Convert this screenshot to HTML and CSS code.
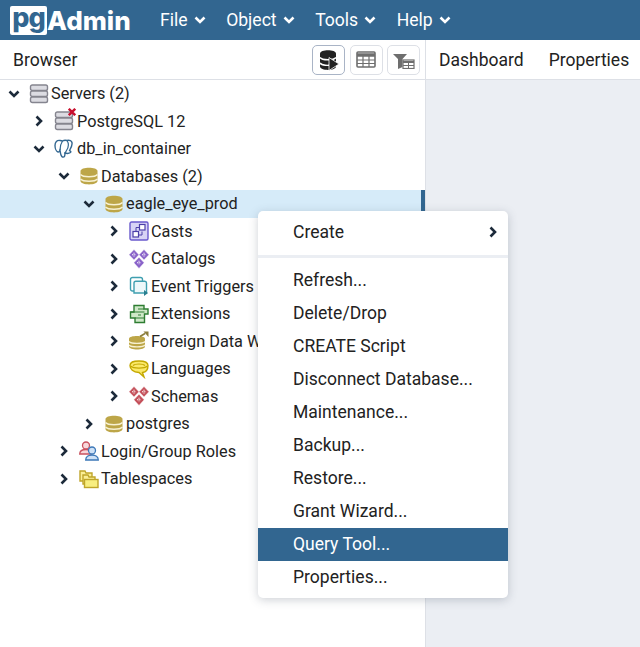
FILE: index.html
```html
<!DOCTYPE html>
<html lang="en">
<head>
  <meta charset="UTF-8" />
  <title>pgAdmin 4</title>
  <link rel="stylesheet" href="styles.css">
</head>
<body>

  <svg class="defs" width="0" height="0">
    <symbol id="open" viewBox="0 0 12 12"><path d="M1.500 3.500L6 8l4.500-4.500" fill="none" stroke="currentColor" stroke-width="2.600"/></symbol>
    <symbol id="closed" viewBox="0 0 12 12"><path d="M3.500 1.500L8 6l-4.500 4.500" fill="none" stroke="currentColor" stroke-width="2.600"/></symbol>
    <symbol id="db" viewBox="0 0 20 20">
      <path d="M1.500 5c0-4.500 17-4.500 17 0v10c0 4.500-17 4.500-17 0z" fill="#bda648"/>
      <path d="M1.500 8.500c2.500 3 14.500 3 17 0M1.500 13c2.500 3 14.500 3 17 0" fill="none" stroke="#f7f1d2" stroke-width="1.400"/>
    </symbol>
    <symbol id="server" viewBox="0 0 20 20">
      <g fill="#dcdce2" stroke="#85858f" stroke-width="1.400">
        <rect x="1.500" y="1" width="17" height="5.500" rx="1.800"/>
        <rect x="1.500" y="7" width="17" height="5.500" rx="1.800"/>
        <rect x="1.500" y="13" width="17" height="5.500" rx="1.800"/>
      </g>
    </symbol>
    <symbol id="diamonds" viewBox="0 0 20 20">
      <g fill="currentColor" stroke="#fff" stroke-width=".5">
        <path d="M5 .5l5 5.200-5 5.200L0 5.700z"/>
        <path d="M15 .5l5 5.200-5 5.200-5-5.200z"/>
        <path d="M10 8.200l5.200 5.600L10 19.500l-5.200-5.700z"/>
      </g>
      <path d="M3 5.700h4M5 3.700v4M13 5.700h4M15 3.700v4M8 13.800h4M10 11.800v4" stroke="#fff" stroke-width="1.100" stroke-dasharray="1 .8"/>
    </symbol>
  </svg>

  <header class="topbar">
    <div class="brand">
      <span class="brand-pg">pg</span><span class="brand-name">Admin</span>
    </div>
    <nav class="topnav">
      <a class="topnav-item">File <svg class="caret"><use href="#open"/></svg></a>
      <a class="topnav-item">Object <svg class="caret"><use href="#open"/></svg></a>
      <a class="topnav-item">Tools <svg class="caret"><use href="#open"/></svg></a>
      <a class="topnav-item">Help <svg class="caret"><use href="#open"/></svg></a>
    </nav>
  </header>

  <main class="workspace">
    <section class="browser">
      <div class="browser-head">
        <span class="browser-title">Browser</span>
        <div class="tools">
          <button class="tool tool-active">
            <svg width="22" height="22" viewBox="0 0 22 22">
              <path d="M2 4.500c0-4.500 16-4.500 16 0v13c0 4.500-16 4.500-16 0z" fill="#222"/>
              <path d="M2 8.500c2 3 14 3 16 0M2 14c2 3 9 2.500 10 2" fill="none" stroke="#fff" stroke-width="1.400"/>
              <path d="M11 8.500l10 6.500-10 6.500z" fill="#222" stroke="#fff" stroke-width=".8"/>
            </svg>
          </button>
          <button class="tool">
            <svg width="20" height="18" viewBox="0 0 20 18">
              <rect x="1" y="1" width="18" height="15" rx="1" fill="#fff" stroke="#6e6e6e" stroke-width="1.600"/>
              <path d="M1 4h18" stroke="#6e6e6e" stroke-width="3.500"/>
              <path d="M1 9h18M1 12.500h18M7 5v11M13 5v11" stroke="#6e6e6e" stroke-width="1.200"/>
            </svg>
          </button>
          <button class="tool">
            <svg width="22" height="18" viewBox="0 0 22 18">
              <path d="M0 3h14L9.500 8v8L5 18V8z" fill="#6e6e6e"/>
              <rect x="10" y="9" width="11" height="8.500" fill="#fff" stroke="#6e6e6e" stroke-width="1.200"/>
              <path d="M10 11h11" stroke="#6e6e6e" stroke-width="2"/>
              <path d="M10 14.500h11M15.500 11v6" stroke="#6e6e6e"/>
            </svg>
          </button>
        </div>
      </div>

      <ul class="tree">
        <li class="row"><svg class="chev"><use href="#open"/></svg>
          <svg class="icon"><use href="#server"/></svg><span>Servers (2)</span></li>
        <li class="row lvl-1"><svg class="chev"><use href="#closed"/></svg>
          <span class="icon-wrap"><svg class="icon"><use href="#server"/></svg>
            <svg class="badge-x" width="8" height="8" viewBox="0 0 8 8"><path d="M.8.8l6.400 6.400M7.200.8L.8 7.200" stroke="#c8102e" stroke-width="2.400"/></svg></span><span>PostgreSQL 12</span></li>
        <li class="row lvl-1"><svg class="chev"><use href="#open"/></svg>
          <svg class="icon" viewBox="0 0 20 20">
            <path d="M6 1.500C3 1 1 3 1 6.500c0 3 1.500 6 3 6.500 1.500.3 1.500-1 2-2 .5 3 .5 6 2.500 7 2 .5 2.500-1 2.500-4 1.500.5 4 .5 5.500-.5 1-1-.5-1.500-1-2 1.500-2.500 3-5 2.500-7.500C18 2 15.500.8 13 1.500 11.500 1 10 1 8.500 2 7.500 1.700 6.700 1.600 6 1.500z" fill="#fff" stroke="#336791" stroke-width="1.400"/>
            <path d="M8.500 2C6.500 5 6 8 6 11M13 1.500c2 3 1.500 7-.5 10-1 1.500-1.500 2-1.500 3.500" fill="none" stroke="#336791" stroke-width="1.200"/>
          </svg><span>db_in_container</span></li>
        <li class="row lvl-2"><svg class="chev"><use href="#open"/></svg>
          <svg class="icon"><use href="#db"/></svg><span>Databases (2)</span></li>
        <li class="row lvl-3 row-selected"><svg class="chev"><use href="#open"/></svg>
          <svg class="icon"><use href="#db"/></svg><span>eagle_eye_prod</span></li>
        <li class="row lvl-4"><svg class="chev"><use href="#closed"/></svg>
          <svg class="icon" viewBox="0 0 20 20">
            <rect x="1" y="1" width="18" height="18" rx="1.500" fill="#d8d4f5" stroke="#6a5acd" stroke-width="1.400"/>
            <rect x="10.500" y="3.500" width="5.500" height="5.500" fill="#fff" stroke="#4b3fa8" stroke-width="1.200"/>
            <rect x="4" y="10.500" width="5.500" height="5.500" fill="#fff" stroke="#4b3fa8" stroke-width="1.200"/>
            <path d="M7 10V6.500h3.500M13 10.500V14H10" fill="none" stroke="#4b3fa8"/>
          </svg><span>Casts</span></li>
        <li class="row lvl-4"><svg class="chev"><use href="#closed"/></svg>
          <svg class="icon icon-purple"><use href="#diamonds"/></svg><span>Catalogs</span></li>
        <li class="row lvl-4"><svg class="chev"><use href="#closed"/></svg>
          <svg class="icon" viewBox="0 0 20 20">
            <path d="M5 15H3.500a2 2 0 0 1-2-2V3.500a2 2 0 0 1 2-2h8a2 2 0 0 1 2 2V5" fill="none" stroke="#3f9fb0" stroke-width="1.400"/>
            <path d="M5 17V7a1.800 1.800 0 0 1 1.800-1.800h9A1.800 1.800 0 0 1 17.500 7v10H5z" fill="#edf8fa" stroke="#3f9fb0" stroke-width="1.400"/>
            <path d="M15 14l4 3-4 3z" fill="#2a7f90"/>
          </svg><span>Event Triggers</span></li>
        <li class="row lvl-4"><svg class="chev"><use href="#closed"/></svg>
          <svg class="icon" viewBox="0 0 20 20">
            <path d="M5 1.500h10v3.500h4v5h-3.500v8.500H6V14H1.500V8H5z" fill="#cfe8c8" stroke="#2e7d32" stroke-width="1.400"/>
            <path d="M1.500 8h14M6 14h9.500M9 5h6M9 11h3" stroke="#2e7d32" stroke-width="1.200"/>
          </svg><span>Extensions</span></li>
        <li class="row lvl-4"><svg class="chev"><use href="#closed"/></svg>
          <svg class="icon" viewBox="0 0 20 20">
            <path d="M0 7.500c0-3.500 16-3.500 16 0v8c0 4-16 4-16 0z" fill="#bda648"/>
            <path d="M0 10.500c2 2.500 14 2.500 16 0M0 14c2 2.500 14 2.500 16 0" fill="none" stroke="#f7f1d2" stroke-width="1.300"/>
            <path d="M11 5.500l5-3" stroke="#8b7d3a" stroke-width="1.600"/>
            <path d="M14.500.5h5V6z" fill="#8b7d3a"/>
          </svg><span>Foreign Data W</span></li>
        <li class="row lvl-4"><svg class="chev"><use href="#closed"/></svg>
          <svg class="icon" viewBox="0 0 20 20">
            <path d="M1 6.500C1 3 4 2 10 2s9 1 9 4.500-1.500 6.500-5.500 7l1.500 4.500-5-4.500C4 13.500 1 10 1 6.500z" fill="#fbe96a" stroke="#c4a800" stroke-width="1.400"/>
            <path d="M1.500 7c3 2.800 14 2.800 17 0M4 6.500c2-2 10-2 12 0" fill="none" stroke="#c4a800" stroke-width="1.100"/>
          </svg><span>Languages</span></li>
        <li class="row lvl-4"><svg class="chev"><use href="#closed"/></svg>
          <svg class="icon icon-red"><use href="#diamonds"/></svg><span>Schemas</span></li>
        <li class="row lvl-3"><svg class="chev"><use href="#closed"/></svg>
          <svg class="icon"><use href="#db"/></svg><span>postgres</span></li>
        <li class="row lvl-2"><svg class="chev"><use href="#closed"/></svg>
          <svg class="icon" viewBox="0 0 20 20">
            <circle cx="7" cy="4.500" r="3.500" fill="#f8d7da" stroke="#c9525f" stroke-width="1.300"/>
            <path d="M.7 13c0-3 3-4.500 6.300-4.500S12 10 12 13z" fill="#f8d7da" stroke="#c9525f" stroke-width="1.300"/>
            <circle cx="13" cy="9.500" r="3.500" fill="#cfe2f7" stroke="#3d78b8" stroke-width="1.300"/>
            <path d="M6.700 19c0-3 2.800-5 6.300-5s6.300 2 6.300 5z" fill="#cfe2f7" stroke="#3d78b8" stroke-width="1.300"/>
          </svg><span>Login/Group Roles</span></li>
        <li class="row lvl-2"><svg class="chev"><use href="#closed"/></svg>
          <svg class="icon" viewBox="0 0 20 20">
            <path d="M1 12V2h5l1 2h6v8z" fill="#fbef96" stroke="#bfa52a" stroke-width="1.400"/>
            <path d="M4 15V6h5l1 2h6v7z" fill="#fbef96" stroke="#bfa52a" stroke-width="1.400"/>
            <rect x="5.500" y="10.500" width="13.500" height="8" fill="#f8ee80" stroke="#bfa52a" stroke-width="1.400"/>
          </svg><span>Tablespaces</span></li>
      </ul>
    </section>

    <section class="content">
      <div class="tabs">
        <span class="tab">Dashboard</span>
        <span class="tab">Properties</span>
      </div>
      <div class="content-body"></div>
    </section>

    <ul class="menu">
      <li class="menu-item">Create <svg class="menu-chev"><use href="#closed"/></svg></li>
      <li class="menu-sep"></li>
      <li class="menu-item">Refresh...</li>
      <li class="menu-item">Delete/Drop</li>
      <li class="menu-item">CREATE Script</li>
      <li class="menu-item">Disconnect Database...</li>
      <li class="menu-item">Maintenance...</li>
      <li class="menu-item">Backup...</li>
      <li class="menu-item">Restore...</li>
      <li class="menu-item">Grant Wizard...</li>
      <li class="menu-item menu-item-active">Query Tool...</li>
      <li class="menu-item">Properties...</li>
    </ul>
  </main>

</body>
</html>
```

FILE: styles.css
```css
html, body {
  margin: 0;
  height: 647px;
  overflow: hidden;
}
body {
  font-family: Roboto, sans-serif;
  font-size: 16.3px;
  color: #222;
  background: #fff;
}
ul {
  list-style: none;
  margin: 0;
  padding: 0;
}
.defs {
  position: absolute;
}

/* top bar */
.topbar {
  display: flex;
  align-items: center;
  height: 40px;
  background: #326690;
  color: #fff;
}
.brand {
  display: flex;
  align-items: center;
  width: 160px;
  padding-left: 10px;
  box-sizing: border-box;
}
.brand-pg {
  display: block;
  width: 37px;
  height: 29px;
  background: #fff;
  color: #326690;
  border-radius: 2px;
  font-family: Inter, sans-serif;
  font-weight: 800;
  font-size: 27px;
  line-height: 24px;
  text-align: center;
  letter-spacing: -1px;
}
.brand-name {
  margin-left: 0;
  font-family: Inter, sans-serif;
  font-weight: 800;
  font-size: 26px;
}
.topnav {
  display: flex;
  gap: 20.5px;
}
.topnav-item {
  display: flex;
  align-items: center;
  gap: 6px;
  font-size: 17.6px;
}
.caret {
  width: 12px;
  height: 12px;
  color: #fff;
}

/* layout */
.workspace {
  position: relative;
  display: flex;
  height: 607px;
}
.browser {
  width: 425px;
  border-right: 1px solid #dde0e6;
}
.browser-head {
  display: flex;
  align-items: center;
  justify-content: space-between;
  height: 39px;
  padding: 0 5px 0 13px;
  border-bottom: 1px solid #dde0e6;
}
.browser-title {
  font-size: 17.6px;
}
.tools {
  display: flex;
  gap: 4.5px;
}
.tool {
  display: flex;
  align-items: center;
  justify-content: center;
  width: 33px;
  height: 30px;
  padding: 0;
  background: #fff;
  border: 1px solid #dde0e6;
  border-radius: 5px;
}
.tool-active {
  border-color: #a9b4c6;
}

/* tree */
.row {
  display: flex;
  align-items: center;
  height: 27.5px;
  padding-left: 8px;
  white-space: nowrap;
}
.lvl-1 { padding-left: 33px; }
.lvl-2 { padding-left: 58px; }
.lvl-3 { padding-left: 83px; }
.lvl-4 { padding-left: 108px; }
.row-selected {
  background: #d6ebf9;
  box-shadow: inset -4px 0 0 #326690;
}
.chev {
  flex: none;
  width: 12px;
  height: 12px;
  margin-right: 10px;
  color: #1c2a3a;
}
.icon {
  flex: none;
  width: 20px;
  height: 20px;
  margin: 0 2px 0 -1px;
}
.lvl-1 .icon {
  margin-right: 3px;
}
.icon-wrap {
  position: relative;
  display: flex;
}
.badge-x {
  position: absolute;
  top: -3px;
  right: 1px;
}
.icon-purple { color: #8a63c9; }
.icon-red { color: #c4505a; }

/* right side */
.content {
  flex: 1;
  display: flex;
  flex-direction: column;
}
.tabs {
  display: flex;
  align-items: center;
  gap: 25px;
  height: 39px;
  padding-left: 13px;
  border-bottom: 1px solid #dde0e6;
  white-space: nowrap;
  font-size: 17.5px;
}
.content-body {
  flex: 1;
  background: #ebeef3;
}

/* context menu */
.menu {
  position: absolute;
  left: 258px;
  top: 171px;
  width: 250px;
  padding: 5px 0 4px;
  background: #fff;
  border-radius: 5px;
  box-shadow: 0 2px 10px rgba(60, 70, 90, .25);
}
.menu-item {
  display: flex;
  align-items: center;
  justify-content: space-between;
  box-sizing: border-box;
  height: 33px;
  padding: 0 9px 1px 35px;
  font-size: 17.55px;
}
.menu-item-active {
  background: #326690;
  color: #fff;
}
.menu-sep {
  height: 3px;
  margin: 6px 0;
  background: #ebeef3;
}
.menu-chev {
  width: 12px;
  height: 12px;
  color: #1c2a3a;
}
```
